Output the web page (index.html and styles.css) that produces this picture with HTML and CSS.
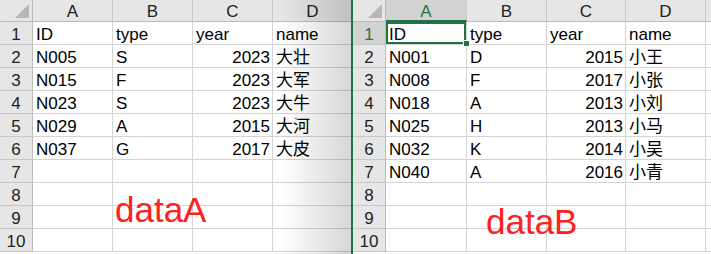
FILE: index.html
```html
<!DOCTYPE html>
<html lang="zh-CN">
<head>
  <meta charset="UTF-8">
  <title>dataA / dataB</title>
  <link rel="stylesheet" href="styles.css">
</head>
<body>
  <div class="screen">
    <!-- Left workbook -->
    <div class="sheet sheet-a">
      <div class="corner"></div>
      <div class="col-head">A</div><div class="col-head">B</div><div class="col-head">C</div><div class="col-head">D</div>

      <div class="row-head">1</div><div class="cell">ID</div><div class="cell">type</div><div class="cell">year</div><div class="cell">name</div>
      <div class="row-head">2</div><div class="cell">N005</div><div class="cell">S</div><div class="cell num">2023</div><div class="cell">大壮</div>
      <div class="row-head">3</div><div class="cell">N015</div><div class="cell">F</div><div class="cell num">2023</div><div class="cell">大军</div>
      <div class="row-head">4</div><div class="cell">N023</div><div class="cell">S</div><div class="cell num">2023</div><div class="cell">大牛</div>
      <div class="row-head">5</div><div class="cell">N029</div><div class="cell">A</div><div class="cell num">2015</div><div class="cell">大河</div>
      <div class="row-head">6</div><div class="cell">N037</div><div class="cell">G</div><div class="cell num">2017</div><div class="cell">大皮</div>
      <div class="row-head">7</div><div class="cell"></div><div class="cell"></div><div class="cell"></div><div class="cell"></div>
      <div class="row-head">8</div><div class="cell"></div><div class="cell"></div><div class="cell"></div><div class="cell"></div>
      <div class="row-head">9</div><div class="cell"></div><div class="cell"></div><div class="cell"></div><div class="cell"></div>
      <div class="row-head">10</div><div class="cell"></div><div class="cell"></div><div class="cell"></div><div class="cell"></div>

      <div class="label label-a">dataA</div>
      <div class="fade"></div>
    </div>

    <div class="divider"></div>

    <!-- Right workbook -->
    <div class="sheet sheet-b">
      <div class="corner"></div>
      <div class="col-head active">A</div><div class="col-head">B</div><div class="col-head">C</div><div class="col-head">D</div><div class="col-head"></div>

      <div class="row-head active">1</div><div class="cell selected">ID</div><div class="cell">type</div><div class="cell">year</div><div class="cell">name</div><div class="cell"></div>
      <div class="row-head">2</div><div class="cell">N001</div><div class="cell">D</div><div class="cell num">2015</div><div class="cell">小王</div><div class="cell"></div>
      <div class="row-head">3</div><div class="cell">N008</div><div class="cell">F</div><div class="cell num">2017</div><div class="cell">小张</div><div class="cell"></div>
      <div class="row-head">4</div><div class="cell">N018</div><div class="cell">A</div><div class="cell num">2013</div><div class="cell">小刘</div><div class="cell"></div>
      <div class="row-head">5</div><div class="cell">N025</div><div class="cell">H</div><div class="cell num">2013</div><div class="cell">小马</div><div class="cell"></div>
      <div class="row-head">6</div><div class="cell">N032</div><div class="cell">K</div><div class="cell num">2014</div><div class="cell">小吴</div><div class="cell"></div>
      <div class="row-head">7</div><div class="cell">N040</div><div class="cell">A</div><div class="cell num">2016</div><div class="cell">小青</div><div class="cell"></div>
      <div class="row-head">8</div><div class="cell"></div><div class="cell"></div><div class="cell"></div><div class="cell"></div><div class="cell"></div>
      <div class="row-head">9</div><div class="cell"></div><div class="cell"></div><div class="cell"></div><div class="cell"></div><div class="cell"></div>
      <div class="row-head">10</div><div class="cell"></div><div class="cell"></div><div class="cell"></div><div class="cell"></div><div class="cell"></div>

      <div class="label label-b">dataB</div>
    </div>
  </div>
</body>
</html>
```

FILE: styles.css
```css
/* Global */
body {
  margin: 0;
  background: #fff;
  font-family: "Liberation Sans", "Noto Sans CJK SC", sans-serif;
  font-size: 17px;
  color: #000;
  overflow: hidden;
}

.screen {
  display: flex;
  width: 711px;
  height: 254px;
  overflow: hidden;
}

/* Sheet grid */
.sheet {
  position: relative;
  display: grid;
  grid-template-rows: 22px repeat(10, 23px) 2px;
  height: 254px;
  overflow: hidden;
  flex-shrink: 0;
}

.sheet-a {
  width: 351px;
  grid-template-columns: 33px 80px 80px 80px 80px;
}

.sheet-b {
  width: 358px;
  grid-template-columns: 33px 81px 80px 79px 80px 80px;
}

.divider {
  width: 2px;
  background: #217346;
  flex-shrink: 0;
}

/* Headers */
.corner {
  position: relative;
  background: #e6e6e6;
  border-right: 1px solid #bcbcbc;
  border-bottom: 1px solid #bcbcbc;
}

.corner::after {
  content: "";
  position: absolute;
  right: 3px;
  bottom: 3px;
  width: 14px;
  height: 14px;
  background: #b7b7b7;
  clip-path: polygon(100% 0, 100% 100%, 0 100%);
}

.col-head {
  background: #e6e6e6;
  border-right: 1px solid #c8c8c8;
  border-bottom: 1px solid #bcbcbc;
  text-align: center;
  line-height: 19px;
  padding-top: 2px;
  color: #222;
}

.row-head {
  background: #e6e6e6;
  border-right: 1px solid #bcbcbc;
  border-bottom: 1px solid #c8c8c8;
  text-align: center;
  line-height: 19px;
  padding-top: 3px;
  color: #222;
}

.col-head.active {
  background: #d2d2d2;
  color: #217346;
  border-bottom: 2px solid #217346;
}

.row-head.active {
  background: #d2d2d2;
  color: #217346;
}

/* Cells */
.col-head,
.row-head,
.cell {
  box-sizing: border-box;
  overflow: hidden;
  white-space: nowrap;
}

.cell {
  border-right: 1px solid #d4d4d4;
  border-bottom: 1px solid #d4d4d4;
  line-height: 19px;
  padding: 3px 2px 0 3px;
}

.cell.num {
  text-align: right;
}

.cell.selected {
  position: relative;
  overflow: visible;
  box-shadow: inset 0 0 0 2px #217346;
  padding-left: 3px;
}

.cell.selected::after {
  content: "";
  position: absolute;
  right: -4px;
  bottom: -3px;
  width: 5px;
  height: 5px;
  background: #217346;
  border: 1px solid #fff;
  z-index: 2;
}

/* Red labels */
.label {
  position: absolute;
  font-size: 35px;
  line-height: 35px;
  color: #ff2020;
}

.label-a {
  left: 115px;
  top: 192px;
}

.label-b {
  left: 133px;
  top: 204px;
}

/* Shadow on the left window's edge */
.fade {
  position: absolute;
  top: 0;
  right: 0;
  width: 70px;
  height: 100%;
  background: linear-gradient(to right, rgba(0, 0, 0, 0), rgba(0, 0, 0, 0.16));
  pointer-events: none;
}
```
